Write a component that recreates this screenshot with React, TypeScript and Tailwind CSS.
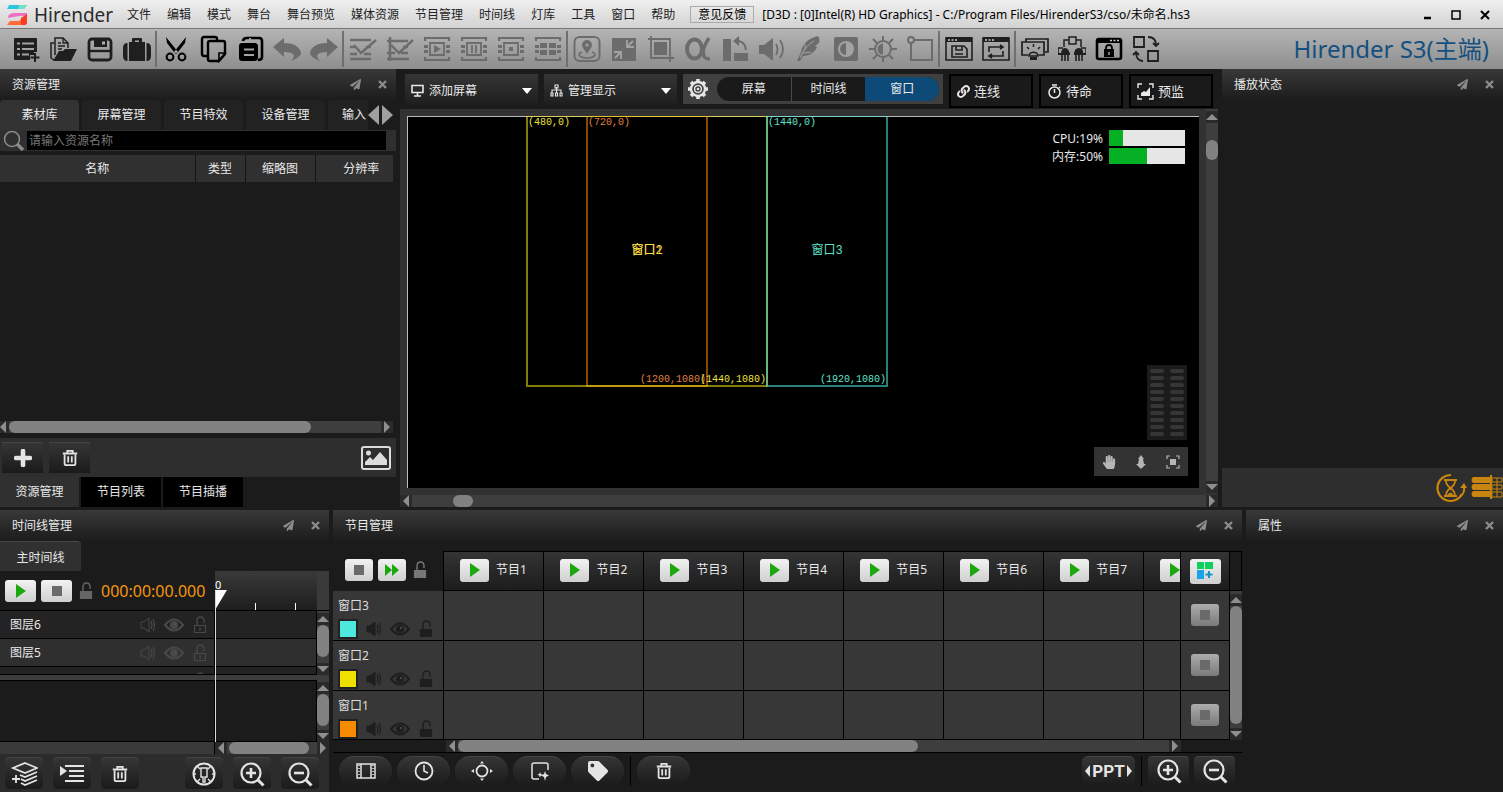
import React from "react";
import { FaLink, FaPaperPlane, FaTag, FaHandPaper } from "react-icons/fa";
import { clsx } from "clsx";

type IconProps = {
  size?: number;
  box?: number;
  className?: string;
  children: React.ReactNode;
};

function Svg({ size = 28, box = 28, className, children }: IconProps) {
  return (
    <svg
      width={size}
      height={size}
      viewBox={`0 0 ${box} ${box}`}
      fill="none"
      stroke="currentColor"
      strokeWidth={2}
      className={clsx("shrink-0", className)}
      aria-hidden="true"
    >
      {children}
    </svg>
  );
}

/* Film strip frame shared by the four preview modes */
function FilmFrame({ children }: { children?: React.ReactNode }) {
  return (
    <g>
      <path d="M2 6V3h24v3M2 22v3h24v-3" strokeWidth={2.2} />
      <path d="M1 10h4v3H1zM1 15h4v3H1zM23 10h4v3h-4zM23 15h4v3h-4z" fill="currentColor" stroke="none" />
      {children}
    </g>
  );
}

type Tool = { label: string; dim?: boolean; icon: React.ReactNode };

const toolGroups: Tool[][] = [
  [
    {
      label: "新建",
      icon: (
        <g>
          <path d="M3 3h21q1 0 1 1v13h-3v3h-4v5H3q-1 0-1-1V4q0-1 1-1z" fill="currentColor" stroke="none" />
          <path d="M5 8.500h3M10 8.500h12M5 14h3M10 14h12M5 19.500h3M10 19.500h7" stroke="#a3a3a3" strokeWidth={2} />
          <path d="M23 18v9M18.500 22.500h9" strokeWidth={2} />
        </g>
      ),
    },
    {
      label: "打开",
      icon: (
        <g>
          <path d="M6 20V3h8l5 5v5" strokeWidth={1.5} />
          <path d="M14 3v5h5M9 8h3M9 11h7M9 14h4" strokeWidth={1.3} />
          <path d="M2 23V8h3M2 23l3 2" strokeWidth={1.5} />
          <path d="M10 16h4l2-2h12l-6 12H4z" fill="currentColor" stroke="none" />
        </g>
      ),
    },
    {
      label: "保存",
      icon: (
        <g>
          <rect x="3" y="4" width="22" height="21" rx="3" strokeWidth={2.8} />
          <path d="M8 3h13v9H8z" fill="currentColor" stroke="none" />
          <path d="M16 8h3" stroke="#b0b0b0" strokeWidth={3} />
          <path d="M4 16h20" strokeWidth={2.4} />
        </g>
      ),
    },
    {
      label: "打包",
      icon: (
        <g fill="currentColor" stroke="none">
          <path d="M9 8V4q0-1 1-1h8q1 0 1 1v4h-3V5.500h-4V8z" />
          <path d="M6 7h16v19H6zM4.500 8v18Q0 26 0 21v-8q0-5 4.500-5zM23.500 8v18q4.500 0 4.500-5v-8q0-5-4.500-5z" />
        </g>
      ),
    },
  ],
  [
    {
      label: "剪切",
      icon: (
        <g className="text-black">
          <path d="M4 2l12 15-2.500 2L5 8zM24 2L12 17l2.500 2L23 8z" fill="currentColor" stroke="none" />
          <circle cx="8" cy="22" r="3.400" strokeWidth={2} />
          <circle cx="20" cy="22" r="3.400" strokeWidth={2} />
        </g>
      ),
    },
    {
      label: "复制",
      icon: (
        <g className="text-black">
          <path d="M9 21H5q-2 0-2-2V4q0-2 2-2h11q2 0 2 2v2" strokeWidth={2.4} />
          <path d="M11 6h13q2 0 2 2v11l-6 7h-9q-2 0-2-2V8q0-2 2-2z" strokeWidth={2.4} />
          <path d="M26 18h-6v8z" strokeWidth={1.6} />
        </g>
      ),
    },
    {
      label: "粘贴",
      icon: (
        <g className="text-black">
          <path d="M7 6q0-3 4-3h12q3 0 3 3v16q0 3-4 3" strokeWidth={2.6} />
          <path d="M6 8h14l2 2v13q0 3-4 3H6q-3 0-3-3V11q0-3 3-3z" fill="currentColor" stroke="none" />
          <path d="M8 14.500h10M8 20h10" stroke="#a3a3a3" strokeWidth={2.2} />
          <path d="M14 3v4" stroke="#a3a3a3" strokeWidth={2} />
        </g>
      ),
    },
    {
      label: "撤销",
      dim: true,
      icon: <path d="M0 12L11 3v5c10 0 16 4 17 10 0 3-5 6-10 8 6-6 2-9-7-9v5z" fill="currentColor" stroke="none" />,
    },
    {
      label: "重做",
      dim: true,
      icon: <path d="M28 12L17 3v5C7 8 1 12 0 18c0 3 5 6 10 8-6-6-2-9 7-9v5z" fill="currentColor" stroke="none" />,
    },
  ],
  [
    {
      label: "全选",
      dim: true,
      icon: (
        <g>
          <path d="M1 5h21M1 12h5M17 12h5M1 19h7M15 19h7M1 24h21" strokeWidth={2.6} />
          <path d="M5 10l7 8L27 5" strokeWidth={2.4} />
        </g>
      ),
    },
    {
      label: "框选",
      dim: true,
      icon: (
        <g>
          <path d="M1 6h21M4 2v24M1 24h22M1 18h8M17 12h5M15 18h7" strokeWidth={2.6} />
          <path d="M5 10l8 8L27 5" strokeWidth={2.4} />
        </g>
      ),
    },
    {
      label: "播放",
      dim: true,
      icon: (
        <FilmFrame>
          <path d="M7 8h14v12H7z" strokeWidth={1.8} />
          <path d="M11 10l7 4-7 4z" fill="currentColor" stroke="none" />
        </FilmFrame>
      ),
    },
    {
      label: "暂停",
      dim: true,
      icon: (
        <FilmFrame>
          <path d="M7 8h14v12H7zM12 10v8M16 10v8" strokeWidth={1.8} />
        </FilmFrame>
      ),
    },
    {
      label: "停止",
      dim: true,
      icon: (
        <FilmFrame>
          <path d="M7 8h14v12H7z" strokeWidth={1.8} />
          <path d="M12 12h4v4h-4z" fill="currentColor" stroke="none" />
        </FilmFrame>
      ),
    },
    {
      label: "分屏",
      dim: true,
      icon: (
        <FilmFrame>
          <path d="M6 8h7v5H6zM15 8h7v5h-7zM6 15h7v5H6zM15 15h7v5h-7z" fill="currentColor" stroke="none" />
        </FilmFrame>
      ),
    },
  ],
  [
    {
      label: "位置",
      dim: true,
      icon: (
        <g>
          <rect x="1.500" y="2" width="25" height="24" rx="5" />
          <path d="M14 19c-3-5-5-7-5-9a5 5 0 0110 0c0 2-2 4-5 9z" fill="currentColor" stroke="none" />
          <circle cx="14" cy="10" r="1.500" fill="#a3a3a3" stroke="none" />
          <path d="M9 17q-3 1-3 3 2 3 8 3t8-3q0-2-3-3" strokeWidth={1.5} />
        </g>
      ),
    },
    {
      label: "缩放",
      dim: true,
      icon: (
        <g>
          <path d="M2 3h24v23H2z" fill="currentColor" stroke="none" />
          <path d="M17 5v7h7M23 6l-5 5M4 17h7v7M5 23l6-6" stroke="#a3a3a3" strokeWidth={1.8} />
        </g>
      ),
    },
    {
      label: "裁剪",
      dim: true,
      icon: (
        <g>
          <path d="M4 1v22h23M1 4h22v23" strokeWidth={1.8} />
          <path d="M7 7h13v13H7z" fill="currentColor" stroke="none" />
        </g>
      ),
    },
    {
      label: "透明度",
      dim: true,
      icon: (
        <g>
          <ellipse cx="10.500" cy="14" rx="7.500" ry="9.500" strokeWidth={4} />
          <path d="M25 3q-8 12-5 18 1 3 6 3" strokeWidth={3.400} />
        </g>
      ),
    },
    {
      label: "旋转",
      dim: true,
      icon: (
        <g>
          <path d="M2 4h8v22H2zM13 18h14v8H13z" fill="currentColor" stroke="none" />
          <path d="M14 6q10-1 11 9" />
          <path d="M12 6l6-5v10z" fill="currentColor" stroke="none" />
        </g>
      ),
    },
    {
      label: "音量",
      dim: true,
      icon: (
        <g>
          <path d="M1 10h5l9-7v23l-9-7H1z" fill="currentColor" stroke="none" />
          <path d="M18 9q3 5 0 11M22 5q6 9 0 18" strokeWidth={1.8} />
        </g>
      ),
    },
    {
      label: "羽化",
      dim: true,
      icon: (
        <g>
          <path
            d="M23 1C14 3 7 9 6 17l-4 9 3 0 3-5c7 0 13-5 14-9l-2-1 4-3c1-3 0-5-1-7z"
            fill="currentColor"
            stroke="none"
          />
          <path d="M5 23Q9 12 19 6M10 15V9M8 18l8-1" stroke="#a3a3a3" strokeWidth={1} />
        </g>
      ),
    },
    {
      label: "对比度",
      dim: true,
      icon: (
        <g>
          <rect x="2" y="2" width="24" height="24" rx="2" fill="currentColor" stroke="none" />
          <circle cx="14" cy="14" r="7" stroke="#a3a3a3" />
          <path d="M14 7a7 7 0 010 14z" fill="#a3a3a3" stroke="none" />
        </g>
      ),
    },
    {
      label: "亮度",
      dim: true,
      icon: (
        <g>
          <circle cx="14" cy="14" r="8" />
          <path d="M14 8.500a5.500 5.500 0 000 11z" fill="currentColor" stroke="none" />
          <path d="M14 1v4M14 23v4M0 14h5M23 14h5M4 4l4 4M20 20l4 4M24 4l-4 4M8 20l-4 4" />
        </g>
      ),
    },
    {
      label: "形状",
      dim: true,
      icon: (
        <g>
          <circle cx="5" cy="5" r="3" />
          <path d="M8 5h18v20H5V8" />
        </g>
      ),
    },
  ],
  [
    {
      label: "保存布局",
      icon: (
        <g>
          <path d="M1 3h26v22H1z" strokeWidth={1.6} />
          <path d="M1 2h26v5H1z" fill="currentColor" stroke="none" />
          <path d="M3 5h2M6.500 5h2M10 5h2" stroke="#ccc" strokeWidth={1.6} />
          <path d="M7 11h12l3 3v8H7zM11 11v4h6v-4M10 19h8" strokeWidth={1.6} />
        </g>
      ),
    },
    {
      label: "重置布局",
      icon: (
        <g>
          <path d="M1 3h26v22H1z" strokeWidth={1.6} />
          <path d="M1 2h26v5H1z" fill="currentColor" stroke="none" />
          <path d="M3 5h2M6.500 5h2M10 5h2" stroke="#ccc" strokeWidth={1.6} />
          <path d="M7 17v-5h13M8 21h13v-5M18 10l3 2-3 2M10 19l-3 2 3 2" strokeWidth={1.6} />
        </g>
      ),
    },
  ],
  [
    {
      label: "投影",
      icon: (
        <g>
          <path d="M5 7V4h22v13h-3" strokeWidth={1.7} />
          <path d="M7 20H1V7h22v13h-5" strokeWidth={1.7} />
          <path d="M8 20a5 5 0 019 0v1H8zM12.500 9v3M6 12l2 2M19 12l-2 2" strokeWidth={1.5} />
          <path d="M9 22h7v3H9z" fill="currentColor" stroke="none" />
        </g>
      ),
    },
    {
      label: "网络",
      icon: (
        <g>
          <path d="M11 2h7v7h-7zM11 5H6v7M18 5h5v7M0 20v-7h5M28 20v-7h-5" strokeWidth={1.5} />
          <path d="M3 20q0-7 4-7t5 7zM16 20q0-7 5-7t4 7zM0 18h12v2H0zM16 18h12v2H16z" fill="currentColor" stroke="none" />
          <path d="M4 20v6M7 20v6M10 20v6M18 20v6M21 20v6M24 20v6" strokeWidth={1.6} />
        </g>
      ),
    },
    {
      label: "锁定",
      icon: (
        <g className="text-black">
          <rect x="2" y="4" width="24" height="20" rx="2" strokeWidth={2.6} />
          <path d="M2 4h24v4H2z" fill="currentColor" stroke="none" />
          <path d="M15 5.500h2M18.500 5.500h2M22 5.500h2" stroke="#ccc" strokeWidth={1.5} />
          <path d="M9 14h10v8H9z" fill="currentColor" stroke="none" />
          <path d="M11 15v-2q0-3 3-3t3 3v2" strokeWidth={1.8} />
          <path d="M14 17v3" stroke="#a3a3a3" strokeWidth={1.5} />
        </g>
      ),
    },
    {
      label: "切换",
      icon: (
        <g>
          <path d="M2 2h10v10H2zM16 16h10v10H16z" strokeWidth={1.8} />
          <path d="M16 2q8 0 8 8M4 17q0 9 7 9M21 8l3 3 3-3M1 20l3-3 3 3" strokeWidth={1.8} />
        </g>
      ),
    },
  ],
];

const menus = ["文件", "编辑", "模式", "舞台", "舞台预览", "媒体资源", "节目管理", "时间线", "灯库", "工具", "窗口", "帮助"];

function TitleBar() {
  return (
    <header className="flex h-[29px] shrink-0 items-center border-b border-[#777] bg-linear-to-b from-[#f0f0f0] to-[#d2d2d2] pt-px pl-[7px] text-xs text-[#222]">
      <svg width="20" height="20" viewBox="0 0 20 20" aria-hidden="true" className="shrink-0">
        <path d="M2 0h18l-3 4H0z" fill="#2cc5de" />
        <path d="M12 0h8l-3 4h-6z" fill="#73e0c8" />
        <path d="M1 13q0-5 7-5h12v5q-3-3-8-2z" fill="#ef6fc4" />
        <path d="M0 20l3-4h9l8-7v8q0 3-3 3z" fill="#ff6a35" />
        <path d="M14 13l6-4v8q0 3-3 3h-3z" fill="#fb3c22" />
      </svg>
      <span className="ml-[7px] w-[93px] text-[19px] leading-7 text-[#2b2b2b]">Hirender</span>
      <nav className="flex gap-4">
        {menus.map((m) => (
          <button key={m} className="whitespace-nowrap">
            {m}
          </button>
        ))}
      </nav>
      <button className="mx-2 ml-[15px] h-[17px] border border-[#aaa] px-[7px] leading-[15px] whitespace-nowrap text-black">
        意见反馈
      </button>
      <span className="whitespace-nowrap text-black">
        [D3D : [0]Intel(R) HD Graphics] - C:/Program Files/HirenderS3/cso/未命名.hs3
      </span>
      <div className="ml-auto flex gap-[15px] pr-[11px] text-black">
        <button aria-label="最小化">
          <Svg size={14} box={14}>
            <path d="M4 10h7" strokeWidth={2.5} />
          </Svg>
        </button>
        <button aria-label="最大化">
          <Svg size={14} box={14}>
            <path d="M3 3h8v8H3z" strokeWidth={1.5} />
          </Svg>
        </button>
        <button aria-label="退出">
          <Svg size={14} box={14}>
            <path d="M3 3l8 8M11 3l-8 8" strokeWidth={2} />
          </Svg>
        </button>
      </div>
    </header>
  );
}

function ToolBar() {
  return (
    <div className="flex h-10 shrink-0 items-center bg-linear-to-b from-[#b4b4b4] to-[#8e8e8e] pr-[14px] pl-[7px]">
      {toolGroups.map((group, i) => (
        <div key={i} className="flex items-center">
          {i > 0 && <div className="h-9 w-[2px] bg-[#6f6f6f]" />}
          {group.map((t) => (
            <button
              key={t.label}
              aria-label={t.label}
              className={clsx("flex h-9 w-[37px] items-center justify-center", t.dim ? "text-[#6c6c6c]" : "text-[#1f1f1f]")}
            >
              <Svg>{t.icon}</Svg>
            </button>
          ))}
        </div>
      ))}
      <span className="ml-auto text-2xl leading-8 whitespace-nowrap text-[#14507f]">Hirender S3(主端)</span>
    </div>
  );
}

function PanelHeader({ title }: { title: string }) {
  return (
    <div className="flex h-[31px] shrink-0 items-center bg-linear-to-b from-[#393939] to-[#1c1c1c] pr-[7px] pl-3">
      <h2 className="flex-1">{title}</h2>
      <div className="flex gap-4 text-[#8c8c8c]">
        <button aria-label="浮动">
          <FaPaperPlane size={11} />
        </button>
        <button aria-label="关闭">
          <Svg size={12} box={12}>
            <path d="M2 2l7 7M9 2L2 9" strokeWidth={2.4} />
          </Svg>
        </button>
      </div>
    </div>
  );
}

type ArrowProps = { dir: "left" | "right" | "up" | "down" };

function Arrow({ dir }: ArrowProps) {
  const paths = {
    left: "M9 0v12L3 6z",
    right: "M3 0v12l6-6z",
    up: "M0 9h12L6 3z",
    down: "M0 3h12L6 9z",
  };
  return (
    <svg width="12" height="12" viewBox="0 0 12 12" fill="#8f8f8f" className="shrink-0 bg-[#2a2a2a]" aria-hidden="true">
      <path d={paths[dir]} />
    </svg>
  );
}

type ScrollProps = {
  vertical?: boolean;
  before: number;
  thumb: number;
  after: number;
  className?: string;
};

/* before / thumb / after are relative shares of the track */
function ScrollBar({ vertical, before, thumb, after, className }: ScrollProps) {
  return (
    <div className={clsx("flex shrink-0 bg-[#3e3e3e]", vertical ? "w-3 flex-col" : "h-3", className)}>
      <Arrow dir={vertical ? "up" : "left"} />
      <div style={{ flexGrow: before }} />
      <div className="rounded-full bg-[#828282]" style={{ flexGrow: thumb }} />
      <div style={{ flexGrow: after }} />
      <Arrow dir={vertical ? "down" : "right"} />
    </div>
  );
}

function TrashIcon({ size = 20 }: { size?: number }) {
  return (
    <Svg size={size} box={20}>
      <path d="M2 5h16M7 4V2h6v2" strokeWidth={2} />
      <path d="M4 6v10q0 2 2 2h8q2 0 2-2V6M8 8v7M12 8v7" strokeWidth={2} />
    </Svg>
  );
}

function ZoomIcon({ plus }: { plus?: boolean }) {
  return (
    <Svg size={26} box={26}>
      <circle cx="12" cy="12" r="9.500" strokeWidth={2.2} />
      <path d="M18.500 18.500l6 6" strokeWidth={3} />
      <path d={plus ? "M7 12h10M12 7v10" : "M7 12h10"} strokeWidth={2.6} />
    </Svg>
  );
}

function VolumeIcon({ outline }: { outline?: boolean }) {
  return (
    <Svg size={18} box={18}>
      <path d="M2 6h3l5-4v14l-5-4H2z" fill={outline ? "none" : "currentColor"} strokeWidth={1} />
      <path d="M12 5q2 4 0 8M14 3q3 6 0 12" strokeWidth={1.2} />
    </Svg>
  );
}

function EyeIcon() {
  return (
    <Svg size={20} box={20}>
      <path d="M1 10q9-11 18 0-9 11-18 0z" strokeWidth={2} />
      <circle cx="10" cy="10" r="4" fill="currentColor" stroke="none" />
      <circle cx="11" cy="9" r="1" fill="#555" stroke="none" />
    </Svg>
  );
}

function LockIcon({ outline }: { outline?: boolean }) {
  return (
    <Svg size={18} box={18}>
      <path d="M6 9V5q0-4 3.500-4T13 5v2" strokeWidth={1.4} />
      <path d="M3.500 9.500h11v7h-11z" fill={outline ? "none" : "currentColor"} strokeWidth={1.2} />
      {outline && <path d="M9 11v4" strokeWidth={1.2} />}
    </Svg>
  );
}

type DarkButtonProps = { label: string; className?: string; children: React.ReactNode };

function DarkButton({ label, className = "h-8 w-[38px] rounded-sm", children }: DarkButtonProps) {
  return (
    <button
      aria-label={label}
      className={clsx(
        "flex shrink-0 items-center justify-center border-t border-[#444] bg-linear-to-b from-[#353535] to-[#1b1b1b] text-[#e4e4e4]",
        className,
      )}
    >
      {children}
    </button>
  );
}

function LightButton({ label, className = "h-[22px] w-7", children }: DarkButtonProps) {
  return (
    <button
      aria-label={label}
      className={clsx("flex shrink-0 items-center justify-center rounded-[3px] bg-linear-to-b from-[#f2f2f2] to-[#cfcfcf]", className)}
    >
      {children}
    </button>
  );
}

const PlayMark = () => (
  <svg width="10" height="14" viewBox="0 0 10 14" fill="#1aa80c" aria-hidden="true">
    <path d="M0 0l10 7-10 7z" />
  </svg>
);

const StopMark = () => <div className="size-[10px] bg-[#6a6a6a]" />;

const resourceTabs = ["素材库", "屏幕管理", "节目特效", "设备管理"];

function ResourcePanel() {
  return (
    <section className="flex w-[396px] shrink-0 flex-col">
      <PanelHeader title="资源管理" />
      <div className="flex h-[30px] items-stretch">
        <div className="flex min-w-0 flex-1 gap-[3px]">
          {resourceTabs.map((t, i) => (
            <button
              key={t}
              className={clsx(
                "w-[79px] shrink-0 rounded-t-sm whitespace-nowrap",
                i === 0 ? "bg-[#333]" : "bg-[#222]",
              )}
            >
              {t}
            </button>
          ))}
          <button className="flex-1 rounded-tl-sm bg-[#222] pl-[14px] text-left whitespace-nowrap">输入</button>
        </div>
        <div className="flex items-center gap-[3px] pr-[3px]">
          <button aria-label="向左">
            <svg width="11" height="20" viewBox="0 0 11 20" fill="#a0a0a0" aria-hidden="true">
              <path d="M11 0v20L0 10z" />
            </svg>
          </button>
          <button aria-label="向右">
            <svg width="11" height="20" viewBox="0 0 11 20" fill="#a0a0a0" aria-hidden="true">
              <path d="M0 0v20l11-10z" />
            </svg>
          </button>
        </div>
      </div>
      <label className="flex h-[21px] items-center bg-[#2f2f2f] pr-[10px] pl-[3px] text-[#8a8a8a]">
        <Svg size={21} box={21}>
          <circle cx="9" cy="9" r="7.500" strokeWidth={1.6} />
          <path d="M14 14l6 6" strokeWidth={3.4} />
        </Svg>
        <input
          aria-label="资源名称"
          placeholder="请输入资源名称"
          className="ml-[3px] h-[19px] min-w-0 flex-1 bg-black pl-[2px] outline-none placeholder:text-[#777]"
        />
      </label>
      <div className="mt-1 flex-1">
        <table className="w-[393px] table-fixed border-collapse">
          <thead>
            <tr className="h-[27px] bg-[#303030]">
              <th className="w-[195px] border-r border-[#151515] p-0 font-normal">名称</th>
              <th className="w-[50px] border-r border-[#151515] p-0 font-normal">类型</th>
              <th className="w-[70px] border-r border-[#151515] p-0 font-normal">缩略图</th>
              <th className="py-0 pr-0 pl-[14px] font-normal">分辨率</th>
            </tr>
          </thead>
        </table>
      </div>
      <ScrollBar before={0} thumb={300} after={70} className="mr-[3px] -ml-[3px]" />
      <div className="mt-[5px] flex h-[39px] items-center gap-[6px] bg-[#2e2e2e] pr-[5px] pl-[2px]">
        <DarkButton label="添加" className="h-[31px] w-[41px]">
          <Svg size={18} box={18}>
            <path d="M9 2v14M2 9h14" strokeWidth={4.6} strokeLinecap="round" />
          </Svg>
        </DarkButton>
        <DarkButton label="删除" className="h-[31px] w-[41px]">
          <TrashIcon size={18} />
        </DarkButton>
        <button aria-label="图片" className="ml-auto text-[#dcdcdc]">
          <svg width="30" height="24" viewBox="0 0 30 24" fill="none" stroke="currentColor" strokeWidth="2" aria-hidden="true">
            <rect x="1" y="1" width="28" height="22" rx="2" />
            <path d="M4 19v-3l5-5 3 3 7-8 7 8v5z" fill="currentColor" stroke="none" />
            <circle cx="7.500" cy="7" r="2.500" fill="currentColor" stroke="none" />
          </svg>
        </button>
      </div>
      <div className="flex h-[30px] gap-[2px]">
        <button className="w-[79px] bg-[#303030]">资源管理</button>
        <button className="w-20 bg-black">节目列表</button>
        <button className="w-20 bg-black">节目插播</button>
      </div>
    </section>
  );
}

type DropDownProps = { label: string; icon: React.ReactNode };

function DropDown({ label, icon }: DropDownProps) {
  return (
    <label className="flex h-[31px] w-[133px] items-center bg-linear-to-b from-[#353535] to-[#1e1e1e] px-[6px] pt-[2px]">
      {icon}
      <select aria-label={label} className="ml-[5px] min-w-0 flex-1 appearance-none bg-transparent outline-none">
        <option>{label}</option>
      </select>
      <svg width="10" height="6" viewBox="0 0 10 6" fill="#fff" aria-hidden="true">
        <path d="M0 0h10L5 6z" />
      </svg>
    </label>
  );
}

function OutlineButton({ label, children }: { label: string; children: React.ReactNode }) {
  return (
    <button className="flex h-[34px] w-[84px] items-center gap-1 border-2 border-black bg-[#1a1a1a] pt-px pl-[6px] text-[13px]">
      {children}
      {label}
    </button>
  );
}

type StageWindow = {
  name: string;
  from: [number, number];
  to: [number, number];
  line: string;
  text: string;
};

const stageWindows: StageWindow[] = [
  { name: "窗口1", from: [720, 0], to: [1200, 1080], line: "border-[#f58b00]/55", text: "text-[#e08040]" },
  { name: "窗口2", from: [480, 0], to: [1440, 1080], line: "border-[#f0e018]/55", text: "text-[#eee23c]" },
  { name: "窗口3", from: [1440, 0], to: [1920, 1080], line: "border-[#4de8de]/55", text: "text-[#62e0cc]" },
];

const STAGE_SCALE = 0.25;

function Meter({ label, value }: { label: string; value: number }) {
  return (
    <div className="flex h-4 items-center justify-end gap-[6px]">
      <span className="pt-[2px]">
        {label}:{value}%
      </span>
      <div className="h-4 w-[76px] bg-[#e6e6e6]">
        <div className="h-full bg-[#06b025]" style={{ width: `${value}%` }} />
      </div>
    </div>
  );
}

function Stage() {
  return (
    <div className="relative min-w-0 flex-1 overflow-hidden bg-black">
      <div className="absolute inset-0 border-t border-l border-[#bbb]" />
      {stageWindows.map((w) => (
        <div
          key={w.name}
          className={clsx("absolute -mt-px -ml-px flex items-center justify-center border-2", w.line, w.text)}
          style={{
            left: w.from[0] * STAGE_SCALE,
            top: w.from[1] * STAGE_SCALE,
            width: (w.to[0] - w.from[0]) * STAGE_SCALE + 2,
            height: (w.to[1] - w.from[1]) * STAGE_SCALE + 2,
          }}
        >
          <span className="absolute top-0 left-0 font-['Liberation_Mono',monospace] text-[10px] leading-[11px]">
            ({w.from.join(",")})
          </span>
          <span className="font-['Liberation_Mono','Noto_Sans_CJK_SC',monospace] text-xs">{w.name}</span>
          <span className="absolute right-0 bottom-0 font-['Liberation_Mono',monospace] text-[10px] leading-[11px]">
            ({w.to.join(",")})
          </span>
        </div>
      ))}

      <div className="absolute top-[14px] right-[14px] flex flex-col gap-[2px]">
        <Meter label="CPU" value={19} />
        <Meter label="内存" value={50} />
      </div>

      <div className="absolute right-[11px] bottom-3 flex flex-col items-end gap-[7px]">
        {/* Audio level */}
        <div className="mr-px grid w-10 grid-cols-2 gap-x-[6px] gap-y-[3px] bg-[#1b1b1b] px-[3px] py-1">
          {Array.from({ length: 20 }, (_, i) => (
            <div key={i} className="h-[4px] rounded-full bg-[#363636]" />
          ))}
        </div>
        <div className="flex h-[29px] w-[94px] items-center justify-between bg-[#333] px-2 text-[#b5b5b5]">
          <button aria-label="平移">
            <FaHandPaper size={14} />
          </button>
          <button aria-label="定位">
            <Svg size={14} box={14}>
              <path d="M7 0l3 4H9l1 5h2l-3 3-2 2-2-2-3-3h2l1-5H4z" fill="currentColor" stroke="none" />
            </Svg>
          </button>
          <button aria-label="适应">
            <Svg size={14} box={14}>
              <path d="M1 4V1h3M10 1h3v3M13 10v3h-3M4 13H1v-3" strokeWidth={1.2} />
              <path d="M4 4h6v6H4z" fill="currentColor" stroke="none" />
            </Svg>
          </button>
        </div>
      </div>
    </div>
  );
}

function StagePanel() {
  return (
    <section className="flex min-w-0 flex-1 flex-col">
      <div className="flex h-10 shrink-0 items-start gap-[6px] pt-[5px] pl-[5px] whitespace-nowrap">
        <DropDown
          label="添加屏幕"
          icon={
            <Svg size={13} box={13}>
              <path d="M1 1.500h11v7H1zM6.500 9v3M3 12h7" strokeWidth={1.6} />
            </Svg>
          }
        />
        <DropDown
          label="管理显示"
          icon={
            <Svg size={13} box={13}>
              <path d="M2 9V6h9v3M6.500 3v6M5 1h3v3H5zM1 9h2v3H1zM5.500 9h2v3h-2zM10 9h2v3h-2z" strokeWidth={1.1} />
            </Svg>
          }
        />
        <div className="flex h-[30px] w-[260px] items-center bg-[#404040] px-1">
          <button aria-label="设置" className="text-[#e6e6e6]">
            <Svg size={22} box={22}>
              <circle cx="11" cy="11" r="7" strokeWidth={2.4} />
              <circle cx="11" cy="11" r="3.400" strokeWidth={1.4} />
              <circle cx="11" cy="11" r="1.300" fill="currentColor" stroke="none" />
              <path
                d="M11 1v3M11 18v3M1 11h3M18 11h3M4 4l2.500 2.500M15.500 15.500L18 18M18 4l-2.500 2.500M6.500 15.500L4 18"
                strokeWidth={3.600}
              />
            </Svg>
          </button>
          <div className="ml-2 flex h-6 flex-1 overflow-hidden rounded-full bg-[#1a1a1a]">
            <button className="flex-1 border-r border-[#4a4a4a]">屏幕</button>
            <button className="flex-1">时间线</button>
            <button className="flex-1 bg-[#0d4a78]">窗口</button>
          </div>
        </div>
        <OutlineButton label="连线">
          <FaLink size={13} />
        </OutlineButton>
        <OutlineButton label="待命">
          <Svg size={15} box={15}>
            <circle cx="7.500" cy="8.500" r="5.500" strokeWidth={1.5} />
            <path d="M7.500 5v4M5 1h5M12 3l1 1" strokeWidth={1.5} />
          </Svg>
        </OutlineButton>
        <OutlineButton label="预监">
          <Svg size={17} box={17}>
            <path d="M1 5V1h4M12 1h4v4M16 12v4h-4M5 16H1v-4" strokeWidth={1.4} />
            <path d="M4 13v-3l3-2 2 1 4-5v9z" fill="currentColor" stroke="none" />
          </Svg>
        </OutlineButton>
      </div>
      <div className="flex min-h-0 flex-1 flex-col gap-[7px] bg-[#323232]">
        <div className="flex min-h-0 flex-1 gap-[7px] pl-[7px]">
          <div className="flex min-w-0 flex-1 pt-[7px]">
            <Stage />
          </div>
          <ScrollBar vertical before={17} thumb={20} after={322} className="-mb-[5px] pt-[2px]" />
        </div>
        <ScrollBar before={41} thumb={20} after={733} />
      </div>
    </section>
  );
}

function StatusPanel() {
  return (
    <section className="flex w-[281px] shrink-0 flex-col">
      <PanelHeader title="播放状态" />
      <div className="flex-1" />
      <div className="flex h-[39px] items-center justify-end gap-1 bg-[#2e2e2e] text-[#c8850f]">
        <button aria-label="倒计时">
          <Svg size={32} box={32}>
            <path d="M16 3A13 13 0 1027 22" strokeWidth={2.2} />
            <path d="M26 24q4-4 3-9" strokeWidth={2} />
            <path d="M25 16l4-5 3 5z" fill="currentColor" stroke="none" />
            <path d="M9 8h13M9 24h13M11 9q0 4 4.500 7 4.500-3 4.500-7M11 24q0-5 4.500-8 4.500 3 4.500 8" strokeWidth={1.8} />
            <path d="M12.500 23q3-5 6 0z" fill="currentColor" stroke="none" />
          </Svg>
        </button>
        <button aria-label="队列">
          <Svg size={32} box={32}>
            <path d="M2 5h18v6H2q-3-3 0-6zM2 12h18v6H2q-3-3 0-6zM2 19h18v6H2q-3-3 0-6z" fill="currentColor" stroke="none" />
            <path d="M20 3v24" strokeWidth={2} />
            <path d="M21 6h10v4H21zM21 13h10v4H21zM21 20h10v5H21zM26 6v19" strokeWidth={1} />
          </Svg>
        </button>
      </div>
    </section>
  );
}

function LayerRow({ name, alt }: { name?: string; alt?: boolean }) {
  return (
    <div className={clsx("flex h-[28px] shrink-0 border-b border-black", alt ? "bg-[#2f2f2f]" : "bg-[#232323]")}>
      <div className="flex w-[215px] items-center gap-[7px] border-r border-black pr-[5px] pl-[10px] text-[#484848]">
        <span className="flex-1 text-[#e8e8e8]">{name}</span>
        <VolumeIcon outline />
        <EyeIcon />
        <LockIcon outline />
      </div>
    </div>
  );
}

function TimelinePanel() {
  return (
    <section className="flex w-[329px] shrink-0 flex-col">
      <PanelHeader title="时间线管理" />
      <button className="h-[30px] w-[81px] rounded-tr-sm border-t border-[#484848] bg-[#303030] pt-[2px]">主时间线</button>
      <div className="relative flex flex-col">
        <div className="flex h-10 border-b border-black">
          <div className="flex w-[215px] items-center pl-[5px]">
            <LightButton label="播放" className="h-[22px] w-[31px]">
              <PlayMark />
            </LightButton>
            <LightButton label="停止" className="ml-[5px] h-[22px] w-[31px]">
              <StopMark />
            </LightButton>
            <button aria-label="锁定" className="ml-[5px] text-[#666]">
              <LockIcon />
            </button>
            <span className="ml-[6px] text-base leading-5 text-[#f3960f]">000:00:00.000</span>
          </div>
          <div className="flex-1 bg-linear-to-b from-[#3a3a3a] to-[#1e1e1e]">
            <div className="h-[19px] text-[11px] leading-[28px] text-white">0</div>
            <svg width="101" height="20" viewBox="0 0 101 20" aria-hidden="true">
              <path d="M0 0h12L0 20z" fill="#fff" />
              <path d="M40.500 13v7M80.500 13v7" stroke="#fff" />
            </svg>
          </div>
          <div className="w-3 bg-[#3a3a3a]" />
        </div>
        <div className="flex h-[64px]">
          <div className="flex-1 overflow-hidden border-r border-b border-black">
            <LayerRow name="图层6" />
            <LayerRow name="图层5" alt />
            <LayerRow />
          </div>
          <ScrollBar vertical before={0} thumb={30} after={6} className="pt-[2px]" />
        </div>
        <div className="h-[5px] bg-[#3c3c3c]" />
        <div className="flex h-[62px]">
          <div className="w-[215px] border-y border-r border-black" />
          <div className="flex-1 border-y border-r border-black" />
          <ScrollBar vertical before={0} thumb={30} after={4} className="pt-[2px]" />
        </div>
        <div className="flex bg-[#3a3a3a]">
          <div className="w-[215px] border-r border-black" />
          <ScrollBar before={2} thumb={80} after={8} className="flex-1" />
        </div>
        {/* Playhead */}
        <div className="absolute top-5 bottom-3 left-[215px] w-px bg-[#d8d8d8]" />
      </div>
      <div className="flex flex-1 items-center gap-[10px] bg-[#2c2c2c] pr-[10px] pl-[5px]">
        <DarkButton label="添加图层">
          <Svg size={28} box={28}>
            <path d="M15 3l12 5-12 5L3 8z" strokeWidth={1.8} />
            <path d="M27 12l-12 5-5-2M27 16l-12 5-4-2M27 20l-12 5-4-2M2 19h8M6 15v8" strokeWidth={1.8} />
          </Svg>
        </DarkButton>
        <DarkButton label="插入">
          <Svg size={26} box={26}>
            <path d="M6 5h19M10 10h15M10 15h15M6 20h19" strokeWidth={1.9} />
            <path d="M1 5l7 5-7 5z" fill="currentColor" stroke="none" />
          </Svg>
        </DarkButton>
        <DarkButton label="删除图层">
          <TrashIcon size={18} />
        </DarkButton>
        <div className="flex-1" />
        <DarkButton label="吸附">
          <Svg size={26} box={26}>
            <circle cx="13" cy="13" r="10.500" />
            <path d="M10 7h6v9h-2v5h-2v-5h-2zM2 13h3M21 13h3M6 5l3 3M20 5l-3 3M6 21l3-3M20 21l-3-3" strokeWidth={1.4} />
          </Svg>
        </DarkButton>
        <DarkButton label="放大">
          <ZoomIcon plus />
        </DarkButton>
        <DarkButton label="缩小">
          <ZoomIcon />
        </DarkButton>
      </div>
    </section>
  );
}

// the last slot is still unnamed
const programs = ["节目1", "节目2", "节目3", "节目4", "节目5", "节目6", "节目7", ""];

const tracks = [
  { name: "窗口3", swatch: "bg-[#4de8de]" },
  { name: "窗口2", swatch: "bg-[#f0e000]" },
  { name: "窗口1", swatch: "bg-[#f58b00]" },
];

const pill = "h-[30px] w-[53px] rounded-[15px]";

function ProgramPanel() {
  return (
    <section className="flex min-w-0 flex-1 flex-col">
      <PanelHeader title="节目管理" />
      <div className="mt-[10px] flex">
        <div className="w-[110px] shrink-0">
          <div className="flex h-10 items-center gap-[5px] pb-[2px] pl-3">
            <LightButton label="全部停止">
              <StopMark />
            </LightButton>
            <LightButton label="下一个">
              <svg width="14" height="12" viewBox="0 0 14 12" fill="#1aa80c" aria-hidden="true">
                <path d="M0 0l7 6-7 6zM7 0l7 6-7 6z" />
              </svg>
            </LightButton>
            <button aria-label="锁定节目" className="text-[#777]">
              <LockIcon />
            </button>
          </div>
          {tracks.map((t) => (
            <div key={t.name} className="h-[50px] border-b border-black bg-[#373737] pt-[6px] pl-[5px] last:h-[49px]">
              <div className="leading-[18px] text-[#dedede]">{t.name}</div>
              <div className="mt-1 flex h-[20px] items-center gap-[7px] text-[#1e1e1e]">
                <div className={clsx("size-[20px] border-2 border-[#222]", t.swatch)} />
                <VolumeIcon />
                <EyeIcon />
                <LockIcon />
              </div>
            </div>
          ))}
        </div>
        <div className="min-w-0 flex-1 overflow-hidden border-x border-black">
          <table className="w-[800px] table-fixed border-collapse">
            <thead>
              <tr className="h-[39px] bg-linear-to-b from-[#343434] to-[#1c1c1c]">
                {programs.map((p) => (
                  <th key={p} className="border-y border-r border-black p-0 pb-[2px] font-normal">
                    <div className="flex items-center gap-[7px] pl-4">
                      <LightButton label={`播放${p}`} className="h-[23px] w-[29px]">
                        <PlayMark />
                      </LightButton>
                      {p}
                    </div>
                  </th>
                ))}
              </tr>
            </thead>
            <tbody>
              {tracks.map((t) => (
                <tr key={t.name} className="h-[50px] bg-[#373737] last:h-[49px]">
                  {programs.map((p) => (
                    <td key={p} className="border-r border-b border-black p-0" />
                  ))}
                </tr>
              ))}
            </tbody>
          </table>
        </div>
        <div className="w-[49px] shrink-0 border-r border-black">
          <div className="flex h-[40px] items-center justify-center border-y border-black bg-linear-to-b from-[#343434] to-[#1c1c1c]">
            <LightButton label="布局" className="h-[25px] w-[31px]">
              <svg width="16" height="18" viewBox="0 0 16 18" aria-hidden="true">
                <path d="M0 0h7v7H0zM8 0h8v7H8z" fill="#0fd05e" />
                <path d="M0 8h7v9H0z" fill="#18a5e8" />
                <path d="M12 9v7M8.500 12.500h7" stroke="#1795c4" strokeWidth="2" />
              </svg>
            </LightButton>
          </div>
          {tracks.map((t) => (
            <div
              key={t.name}
              className="flex h-[50px] items-center justify-center border-b border-black bg-[#373737] pb-px last:h-[49px]"
            >
              <button
                aria-label={`停止${t.name}`}
                className="flex h-[22px] w-7 items-center justify-center rounded-[3px] bg-linear-to-b from-[#adadad] to-[#7a7a7a]"
              >
                <StopMark />
              </button>
            </div>
          ))}
        </div>
        <div className="flex w-3 shrink-0 flex-col">
          <div className="h-[40px] border-y border-r border-black" />
          <ScrollBar vertical before={0} thumb={118} after={4} className="flex-1 pt-[3px]" />
        </div>
      </div>
      <div className="flex h-[13px] border-b border-black pr-[61px] pl-[113px]">
        <ScrollBar before={0} thumb={459} after={250} className="flex-1" />
      </div>
      <div className="flex flex-1 items-center gap-[5px] pr-[7px] pb-1 pl-[6px]">
        <DarkButton label="影片" className={pill}>
          <Svg size={20} box={20}>
            <path d="M1 3h18v14H1zM5 3v14M15 3v14" strokeWidth={1.5} />
            <path d="M3 4v12M17 4v12" strokeDasharray="1 2" strokeWidth={1.5} />
          </Svg>
        </DarkButton>
        <DarkButton label="定时" className={pill}>
          <Svg size={20} box={20}>
            <circle cx="10" cy="10" r="8.500" strokeWidth={1.8} />
            <path d="M10 4v6l4 2" strokeWidth={1.6} />
          </Svg>
        </DarkButton>
        <DarkButton label="定位点" className={pill}>
          <Svg size={22} box={22}>
            <circle cx="11" cy="11" r="5.500" strokeWidth={1.8} />
            <path d="M11 1l2 2.500H9zM11 21l2-2.500H9zM0 11l3-2v4zM22 11l-3-2v4z" fill="currentColor" stroke="none" />
          </Svg>
        </DarkButton>
        <DarkButton label="特效" className={pill}>
          <Svg size={20} box={20}>
            <path d="M18 9V4q0-2-2-2H4Q2 2 2 4v12q0 2 2 2h5" strokeWidth={1.5} />
            <path
              d="M15 10l1 3 3 1.500-3 1.500-1 4-1-4-3-1.500 3-1.500zM10 11l.8 2 2 .8-2 .8-.8 2-.8-2-2-.8 2-.8z"
              fill="currentColor"
              stroke="none"
            />
          </Svg>
        </DarkButton>
        <DarkButton label="标签" className={pill}>
          <FaTag size={20} />
        </DarkButton>
        <div className="mx-px h-[30px] w-px bg-black" />
        <DarkButton label="删除节目" className={pill}>
          <TrashIcon size={18} />
        </DarkButton>
        <div className="flex-1" />
        <DarkButton label="PPT" className="h-[30px] w-[53px] rounded-md">
          <svg width="5" height="12" viewBox="0 0 5 12" fill="currentColor" aria-hidden="true">
            <path d="M5 0v12L0 6z" />
          </svg>
          <span className="px-[2px] font-[Roboto,sans-serif] text-[17px] leading-5 font-bold">PPT</span>
          <svg width="5" height="12" viewBox="0 0 5 12" fill="currentColor" aria-hidden="true">
            <path d="M0 0v12l5-6z" />
          </svg>
        </DarkButton>
        <div className="mx-px h-[30px] w-px bg-black" />
        <DarkButton label="放大节目" className="h-[30px] w-[41px] rounded-sm">
          <ZoomIcon plus />
        </DarkButton>
        <DarkButton label="缩小节目" className="h-[30px] w-[41px] rounded-sm">
          <ZoomIcon />
        </DarkButton>
      </div>
    </section>
  );
}

export default function App() {
  return (
    <div className="flex h-screen flex-col overflow-hidden bg-[#1b1b1b] font-['Noto_Sans','Noto_Sans_CJK_SC',sans-serif] text-xs text-[#e8e8e8]">
      <TitleBar />
      <ToolBar />
      <div className="flex min-h-0 flex-1 gap-1">
        <ResourcePanel />
        <StagePanel />
        <StatusPanel />
      </div>
      <div className="mt-[3px] flex h-[282px] shrink-0 gap-1">
        <TimelinePanel />
        <ProgramPanel />
        <section className="w-[257px] shrink-0">
          <PanelHeader title="属性" />
        </section>
      </div>
    </div>
  );
}
